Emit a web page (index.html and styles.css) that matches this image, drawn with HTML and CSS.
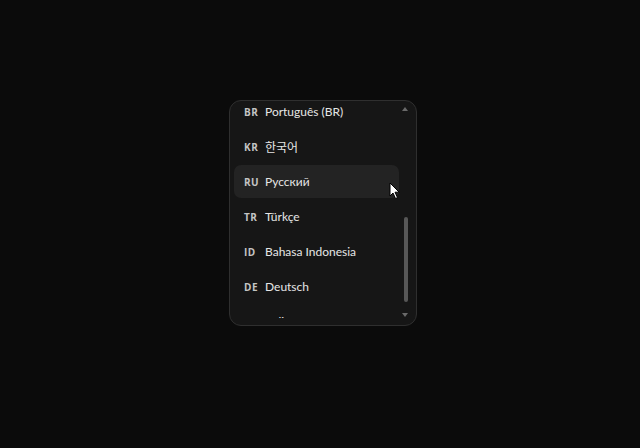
FILE: index.html
```html
<!DOCTYPE html>
<html lang="en">
<head>
<meta charset="utf-8">
<title>Language menu</title>
<link rel="stylesheet" href="styles.css">
</head>
<body>
<div class="stage">
  <div class="menu">
    <div class="viewport">
      <ul class="list">
        <li class="row"><span class="code">BR</span><span class="label">Português (BR)</span></li>
        <li class="row"><span class="code">KR</span><span class="label">한국어</span></li>
        <li class="row hover"><span class="code">RU</span><span class="label">Русский</span></li>
        <li class="row"><span class="code">TR</span><span class="label">Türkçe</span></li>
        <li class="row"><span class="code">ID</span><span class="label">Bahasa Indonesia</span></li>
        <li class="row"><span class="code">DE</span><span class="label">Deutsch</span></li>
        <li class="row"><span class="code">IT</span><span class="label">Italiano</span></li>
      </ul>
    </div>
    <div class="arrow up"></div>
    <div class="thumb"></div>
    <div class="arrow down"></div>
    <svg class="cursor" width="12" height="18" viewBox="0 0 12 18">
      <path d="M1 1 L1 14 L4 11 L6.5 16.5 L8.5 15.6 L6 10.2 L10.2 10.2 Z" fill="#fff" stroke="#000" stroke-width="1" stroke-linejoin="round"/>
    </svg>
  </div>
</div>
</body>
</html>
```
FILE: styles.css
```css
html, body {
  margin: 0;
  padding: 0;
  background: #0b0b0b;
  width: 640px;
  height: 448px;
  overflow: hidden;
  font-family: "Lato", "Noto Sans CJK KR", sans-serif;
}
.stage {
  padding: 100px 0 0 229px;
}
.menu {
  position: relative;
  box-sizing: border-box;
  width: 188px;
  height: 226px;
  background: #161616;
  border: 1px solid #2f2f2f;
  border-radius: 12px;
  overflow: hidden;
}
.viewport {
  height: 217px;
  overflow: hidden;
}
.list {
  list-style: none;
  margin: -6px 0 0 0;
  padding: 0 17px 0 4px;
  display: flex;
  flex-direction: column;
  gap: 2px;
}
.row {
  height: 33px;
  flex: none;
  display: flex;
  align-items: center;
  padding-left: 10px;
  border-radius: 7px;
}
.row.hover {
  background: #232323;
}
.code {
  width: 21px;
  flex: none;
  font-family: "Open Sans", sans-serif;
  font-size: 10px;
  font-weight: 700;
  letter-spacing: 0.5px;
  color: #c4c4c4;
}
.label {
  font-size: 12px;
  color: #e6e6e6;
  font-family: "Lato", "Noto Sans CJK KR", sans-serif;
}
.arrow {
  position: absolute;
  left: 172px;
  width: 0;
  height: 0;
  border-left: 3px solid transparent;
  border-right: 3px solid transparent;
}
.arrow.up {
  top: 6px;
  border-bottom: 4px solid #6a6a6a;
}
.arrow.down {
  top: 212px;
  border-top: 4px solid #6a6a6a;
}
.thumb {
  position: absolute;
  left: 174px;
  top: 116px;
  width: 4px;
  height: 85px;
  border-radius: 2px;
  background: #575757;
}
.cursor {
  position: absolute;
  left: 159px;
  top: 81px;
}
```
